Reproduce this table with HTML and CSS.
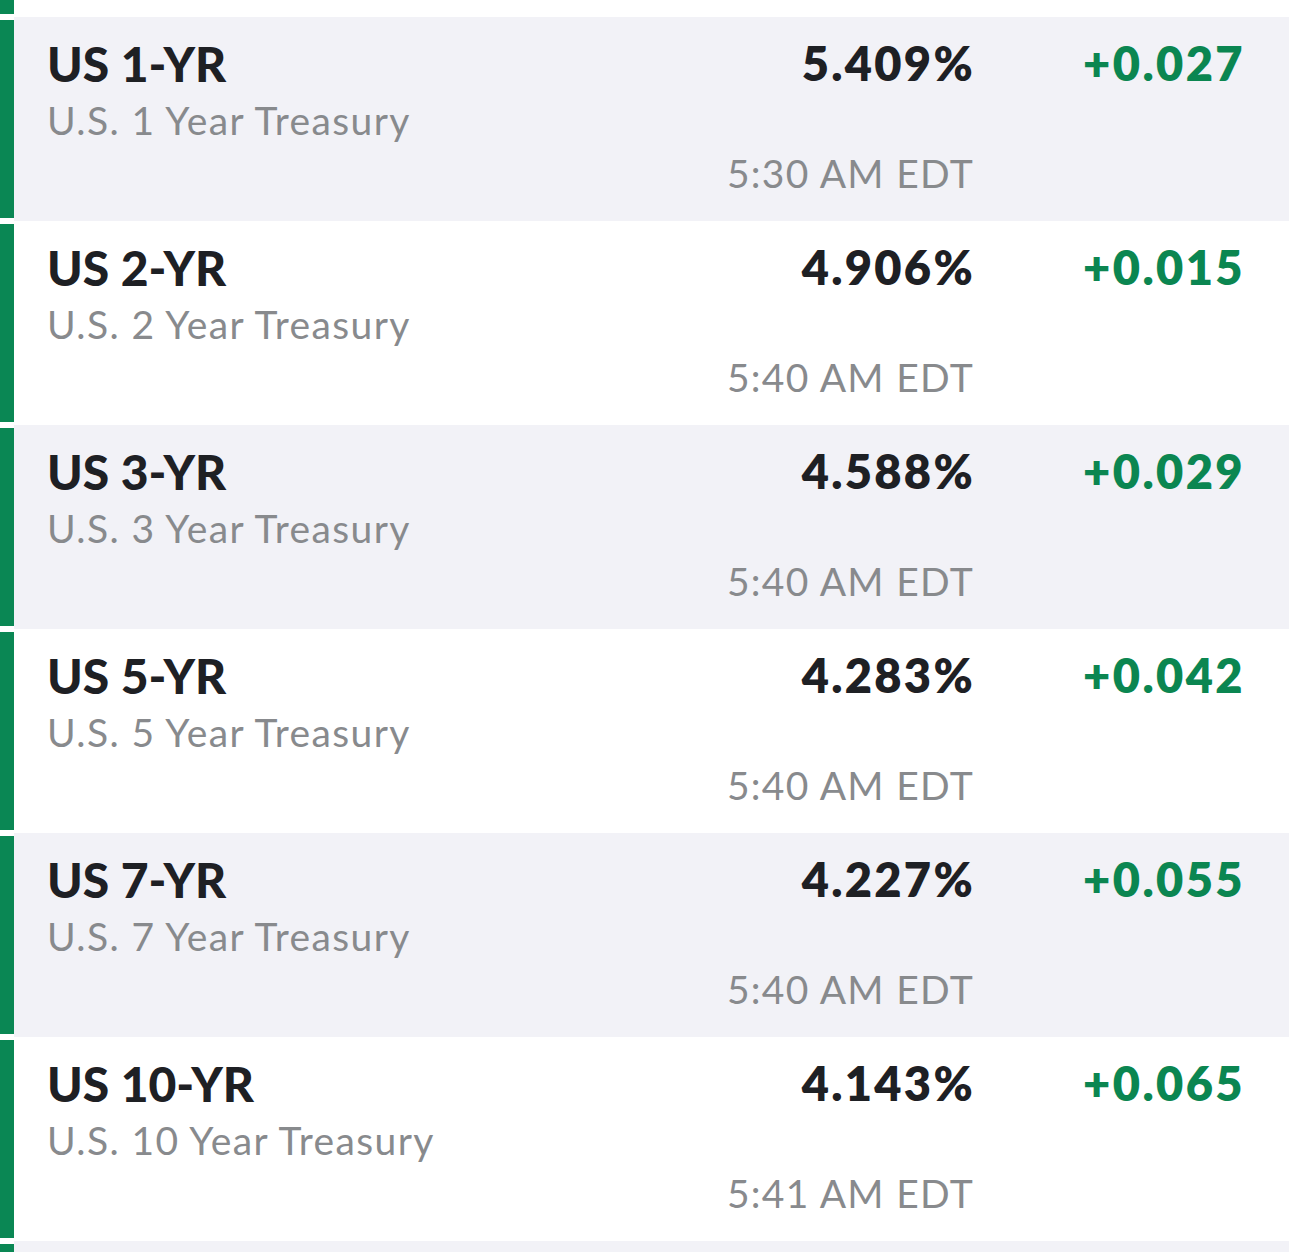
FILE: index.html
```html
<!DOCTYPE html>
<html lang="en">
<head>
    <meta charset="UTF-8">
    <meta name="viewport" content="width=device-width, initial-scale=1.0">
    <title>US Treasuries</title>
    <link rel="stylesheet" href="styles.css">
</head>
<body>
    <div class="list">
        <div class="row stub">
            <div class="bar"></div>
            <div class="cell"></div>
        </div>

        <div class="row shaded">
            <div class="bar"></div>
            <div class="cell">
                <div class="name">
                    <div class="symbol">US 1-YR</div>
                    <div class="desc">U.S. 1 Year Treasury</div>
                </div>
                <div class="quote">
                    <div class="value">5.409%</div>
                    <div class="time">5:30 AM EDT</div>
                </div>
                <div class="change">+0.027</div>
            </div>
        </div>

        <div class="row">
            <div class="bar"></div>
            <div class="cell">
                <div class="name">
                    <div class="symbol">US 2-YR</div>
                    <div class="desc">U.S. 2 Year Treasury</div>
                </div>
                <div class="quote">
                    <div class="value">4.906%</div>
                    <div class="time">5:40 AM EDT</div>
                </div>
                <div class="change">+0.015</div>
            </div>
        </div>

        <div class="row shaded">
            <div class="bar"></div>
            <div class="cell">
                <div class="name">
                    <div class="symbol">US 3-YR</div>
                    <div class="desc">U.S. 3 Year Treasury</div>
                </div>
                <div class="quote">
                    <div class="value">4.588%</div>
                    <div class="time">5:40 AM EDT</div>
                </div>
                <div class="change">+0.029</div>
            </div>
        </div>

        <div class="row">
            <div class="bar"></div>
            <div class="cell">
                <div class="name">
                    <div class="symbol">US 5-YR</div>
                    <div class="desc">U.S. 5 Year Treasury</div>
                </div>
                <div class="quote">
                    <div class="value">4.283%</div>
                    <div class="time">5:40 AM EDT</div>
                </div>
                <div class="change">+0.042</div>
            </div>
        </div>

        <div class="row shaded">
            <div class="bar"></div>
            <div class="cell">
                <div class="name">
                    <div class="symbol">US 7-YR</div>
                    <div class="desc">U.S. 7 Year Treasury</div>
                </div>
                <div class="quote">
                    <div class="value">4.227%</div>
                    <div class="time">5:40 AM EDT</div>
                </div>
                <div class="change">+0.055</div>
            </div>
        </div>

        <div class="row">
            <div class="bar"></div>
            <div class="cell">
                <div class="name">
                    <div class="symbol">US 10-YR</div>
                    <div class="desc">U.S. 10 Year Treasury</div>
                </div>
                <div class="quote">
                    <div class="value">4.143%</div>
                    <div class="time">5:41 AM EDT</div>
                </div>
                <div class="change">+0.065</div>
            </div>
        </div>

        <div class="row shaded tail">
            <div class="bar"></div>
            <div class="cell"></div>
        </div>
    </div>
</body>
</html>
```

FILE: styles.css
```css
body {
    margin: 0;
    background-color: #FFFFFF;
    font-family: Lato, "Liberation Sans", sans-serif;
    overflow: hidden;
}
.list {
    display: flex;
    flex-direction: column;
}
.row {
    display: flex;
    height: 204px;
}
.row.stub {
    height: 17px;
}
.row.stub .bar {
    margin-top: 0;
}
.row.tail {
    height: 11px;
}
.row.tail .bar {
    margin-bottom: 0;
}
.bar {
    width: 14px;
    margin: 3px 0;
    background-color: #0A8754;
    flex-shrink: 0;
}
.cell {
    flex: 1;
    display: flex;
    padding-right: 46px;
}
.shaded .cell {
    background-color: #F2F2F7;
}
.name {
    flex: 1;
    padding-left: 33px;
    padding-top: 19px;
}
.symbol {
    font-size: 48px;
    line-height: 56px;
    font-weight: 900;
    color: #1E2024;
}
.desc {
    font-size: 39px;
    line-height: 56px;
    letter-spacing: 1.4px;
    color: #888A8D;
}
.quote {
    padding-top: 18px;
    text-align: right;
}
.value {
    font-size: 47px;
    line-height: 56px;
    font-weight: 800;
    letter-spacing: 2.3px;
    margin-right: -2px;
    color: #1E2024;
}
.time {
    margin-top: 54px;
    margin-right: -1px;
    font-size: 39px;
    line-height: 56px;
    letter-spacing: 1.3px;
    color: #888A8D;
}
.change {
    width: 272px;
    padding-top: 18px;
    margin-right: -2px;
    text-align: right;
    font-size: 47px;
    line-height: 56px;
    font-weight: 800;
    letter-spacing: 2.4px;
    color: #0B8651;
}
```
